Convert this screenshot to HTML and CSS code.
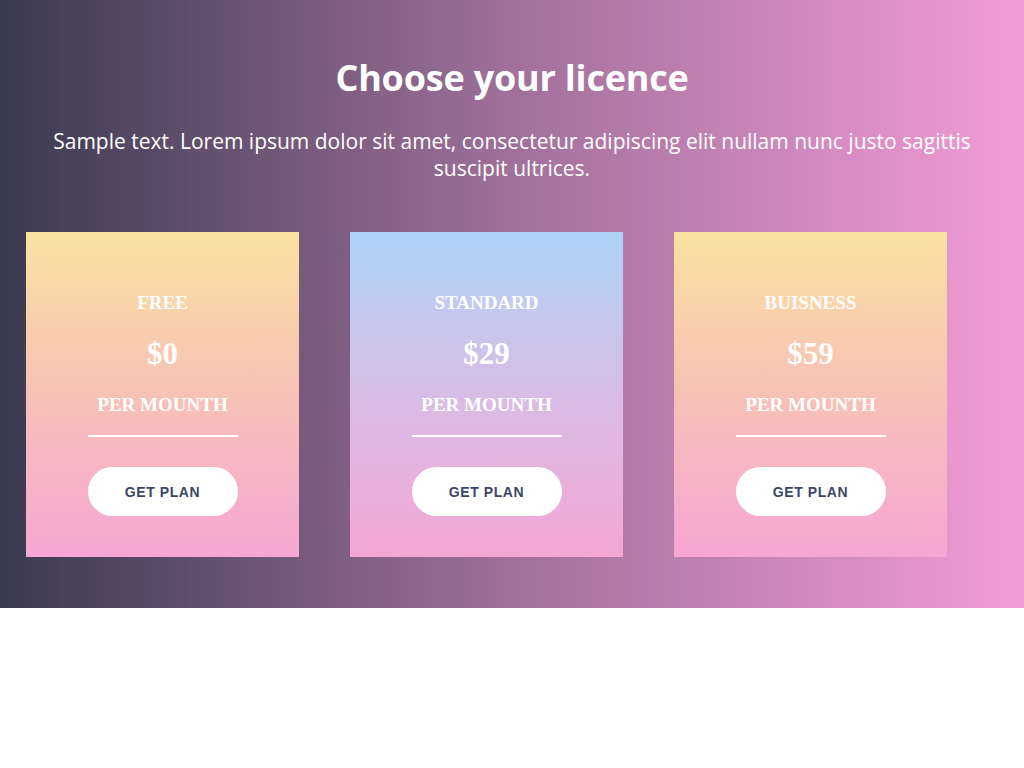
FILE: index.html
```html
<!DOCTYPE html>
<html lang="en">
<head>
<meta charset="utf-8">
<title>Choose your licence</title>
<link rel="stylesheet" href="styles.css">
</head>
<body>
<section class="pricing">
  <h1 class="title">Choose your licence</h1>
  <p class="lead">Sample text. Lorem ipsum dolor sit amet, consectetur adipiscing elit nullam nunc justo sagittis suscipit ultrices.</p>
  <div class="cards">
    <div class="card card-warm">
      <div class="plan">FREE</div>
      <div class="price">$0</div>
      <div class="period">PER MOUNTH</div>
      <div class="rule"></div>
      <a class="btn" href="#">GET PLAN</a>
    </div>
    <div class="card card-cool">
      <div class="plan">STANDARD</div>
      <div class="price">$29</div>
      <div class="period">PER MOUNTH</div>
      <div class="rule"></div>
      <a class="btn" href="#">GET PLAN</a>
    </div>
    <div class="card card-warm">
      <div class="plan">BUISNESS</div>
      <div class="price">$59</div>
      <div class="period">PER MOUNTH</div>
      <div class="rule"></div>
      <a class="btn" href="#">GET PLAN</a>
    </div>
  </div>
</section>
</body>
</html>
```
FILE: styles.css
```css
html, body {
  margin: 0;
  padding: 0;
  background: #ffffff;
}

.pricing {
  height: 608px;
  box-sizing: border-box;
  padding-top: 56px;
  background: linear-gradient(to right, #3a3a50 0%, #a0709a 50%, #f49cd6 100%);
  color: #ffffff;
  font-family: "Open Sans", "Liberation Sans", sans-serif;
}

.title {
  margin: 0;
  text-align: center;
  font-size: 36px;
  line-height: 43px;
  font-weight: 700;
  letter-spacing: -0.2px;
}

.lead {
  margin: 29px auto 0;
  width: 940px;
  text-align: center;
  font-size: 21px;
  line-height: 27px;
}

.cards {
  display: flex;
  gap: 51px;
  padding-left: 26px;
  margin-top: 50px;
}

.card {
  width: 273px;
  height: 325px;
  box-sizing: border-box;
  padding-top: 61px;
  display: flex;
  flex-direction: column;
  align-items: center;
  font-family: "Liberation Serif", "Times New Roman", serif;
  font-weight: 700;
  color: #ffffff;
}

.card-warm {
  background: linear-gradient(to bottom, #fae2a0 0%, #f7c4b4 45%, #f6a6d4 100%);
}

.card-cool {
  background: linear-gradient(to bottom, #aed4f8 0%, #d8bde5 50%, #f4a6d4 100%);
}

.plan {
  font-size: 19px;
  line-height: 19px;
}

.price {
  margin-top: 26px;
  font-size: 31px;
  line-height: 31px;
}

.period {
  margin-top: 26px;
  font-size: 19px;
  line-height: 19px;
}

.rule {
  margin-top: 21px;
  width: 150px;
  height: 2px;
  background: #ffffff;
}

.btn {
  margin-top: 30px;
  width: 150px;
  height: 49px;
  border-radius: 25px;
  background: #ffffff;
  display: flex;
  align-items: center;
  justify-content: center;
  text-decoration: none;
  font-family: "Liberation Sans", Arial, sans-serif;
  font-weight: 700;
  font-size: 14px;
  letter-spacing: 0.6px;
  color: #3c4768;
}
```
